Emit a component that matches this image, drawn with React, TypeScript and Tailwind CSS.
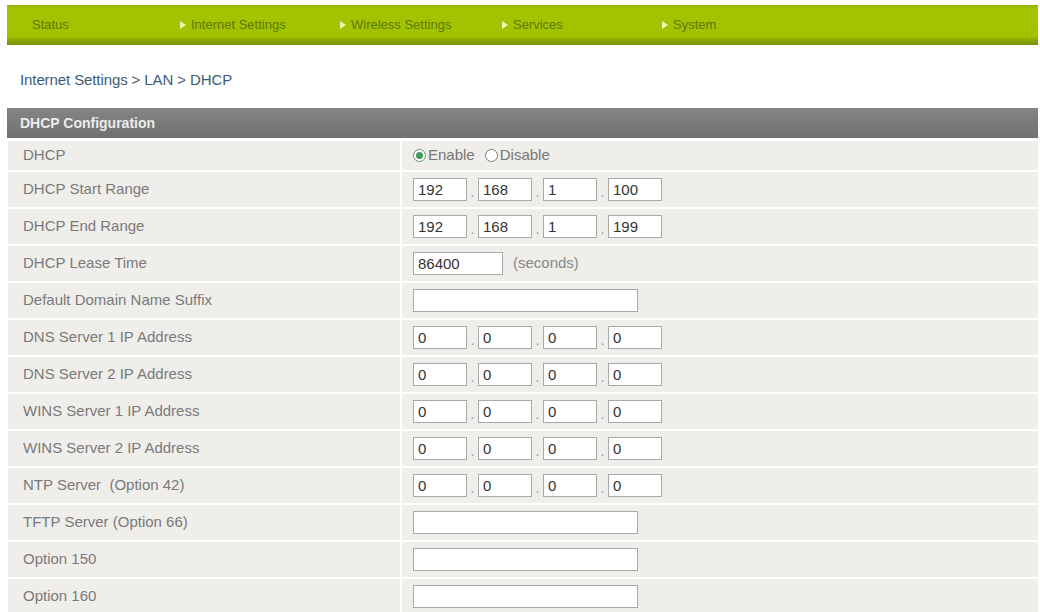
import React from "react";

// Router admin page: LAN > DHCP configuration form.

const NAV = [
  { label: "Status", arrow: false, w: "w-[148px]" },
  { label: "Internet Settings", arrow: true, w: "w-[160px]" },
  { label: "Wireless Settings", arrow: true, w: "w-[162px]" },
  { label: "Services", arrow: true, w: "w-[160px]" },
  { label: "System", arrow: true, w: "w-[120px]" },
];

type Field =
  | { kind: "radio" }
  | { kind: "ip"; value: string[] }
  | { kind: "lease"; value: string }
  | { kind: "text" };

const ROWS: { label: string; field: Field }[] = [
  { label: "DHCP", field: { kind: "radio" } },
  { label: "DHCP Start Range", field: { kind: "ip", value: ["192", "168", "1", "100"] } },
  { label: "DHCP End Range", field: { kind: "ip", value: ["192", "168", "1", "199"] } },
  { label: "DHCP Lease Time", field: { kind: "lease", value: "86400" } },
  { label: "Default Domain Name Suffix", field: { kind: "text" } },
  { label: "DNS Server 1 IP Address", field: { kind: "ip", value: ["0", "0", "0", "0"] } },
  { label: "DNS Server 2 IP Address", field: { kind: "ip", value: ["0", "0", "0", "0"] } },
  { label: "WINS Server 1 IP Address", field: { kind: "ip", value: ["0", "0", "0", "0"] } },
  { label: "WINS Server 2 IP Address", field: { kind: "ip", value: ["0", "0", "0", "0"] } },
  { label: "NTP Server  (Option 42)", field: { kind: "ip", value: ["0", "0", "0", "0"] } },
  { label: "TFTP Server (Option 66)", field: { kind: "text" } },
  { label: "Option 150", field: { kind: "text" } },
  { label: "Option 160", field: { kind: "text" } },
];

const INPUT =
  "h-[23px] border border-[#a9a9a9] bg-white px-[4px] text-[15px] leading-[21px] text-[#333] outline-none font-['Liberation_Sans',Arial,sans-serif]";

function Arrow() {
  return (
    <svg width="6" height="8" viewBox="0 0 6 8" className="mr-[5px]">
      <path d="M0 0 L6 4 L0 8 Z" fill="#eef5b0" />
    </svg>
  );
}

function Radio({ checked, label }: { checked: boolean; label: string }) {
  return (
    <label className="flex items-center gap-[2px]">
      <span
        className={
          checked
            ? "flex h-[13px] w-[13px] items-center justify-center rounded-full border border-[#6c907a] bg-white"
            : "flex h-[13px] w-[13px] items-center justify-center rounded-full border border-[#7d7d7d] bg-white"
        }
      >
        {checked && <span className="h-[7px] w-[7px] rounded-full bg-[#3f9a5e]" />}
      </span>
      <span className="text-[15px] text-[#777]">{label}</span>
    </label>
  );
}

function IpField({ value }: { value: string[] }) {
  return (
    <div className="flex items-end">
      {value.map((v, i) => (
        <React.Fragment key={i}>
          {i > 0 && <span className="w-[11px] text-center text-[14px] leading-[18px] text-[#999]">.</span>}
          <input readOnly defaultValue={v} className={`${INPUT} w-[54px]`} />
        </React.Fragment>
      ))}
    </div>
  );
}

function FieldCell({ field }: { field: Field }) {
  switch (field.kind) {
    case "radio":
      return (
        <div className="flex items-center gap-[10px]">
          <Radio checked label="Enable" />
          <Radio checked={false} label="Disable" />
        </div>
      );
    case "ip":
      return <IpField value={field.value} />;
    case "lease":
      return (
        <div className="flex items-center gap-[10px]">
          <input readOnly defaultValue={field.value} className={`${INPUT} w-[90px]`} />
          <span className="text-[15px] text-[#888]">(seconds)</span>
        </div>
      );
    default:
      return <input readOnly defaultValue="" className={`${INPUT} w-[225px]`} />;
  }
}

export default function App() {
  return (
    <div className="min-h-[612px] bg-white pt-[5px] font-['Liberation_Sans',Arial,sans-serif]">
      <nav className="ml-[7px] flex h-[40px] w-[1031px] items-center bg-[linear-gradient(to_bottom,#8ead00_0%,#a4c402_8%,#a2c200_78%,#8aa600_88%,#778f00_100%)] pl-[25px] text-[13px] text-[#5f7a00]">
        {NAV.map((n) => (
          <div key={n.label} className={`flex items-center ${n.w}`}>
            {n.arrow && <Arrow />}
            <span>{n.label}</span>
          </div>
        ))}
      </nav>

      <div className="ml-[20px] mt-[26px] h-[18px] text-[15px] leading-[18px] tracking-[-0.1px] text-[#3d5b78]">
        Internet Settings &gt; LAN &gt; DHCP
      </div>

      <div className="ml-[7px] mt-[19px] w-[1031px]">
        <div className="flex h-[30px] items-center bg-[linear-gradient(to_bottom,#858585,#707070)] pl-[13px] text-[14px] font-bold text-[#ececec]">
          DHCP Configuration
        </div>
        <div className="flex flex-col gap-[2px] pt-[3px]">
          {ROWS.map((r, i) => (
            <div key={r.label} className={i === 0 ? "flex h-[29px] gap-[2px]" : "flex h-[35px] gap-[2px]"}>
              <div className="ml-[1px] flex w-[392px] items-center bg-[#efeeea] pl-[15px] text-[15px] whitespace-pre text-[#7a7a7a]">
                {r.label}
              </div>
              <div className="flex flex-1 items-center bg-[#efeeea] pl-[11px]">
                <FieldCell field={r.field} />
              </div>
            </div>
          ))}
        </div>
      </div>
    </div>
  );
}
